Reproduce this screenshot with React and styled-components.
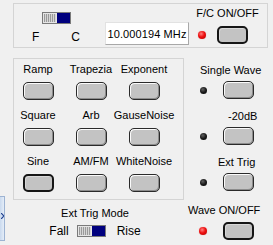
import styled, { createGlobalStyle } from "styled-components";

const GlobalStyle = createGlobalStyle`
  body {
    margin: 0;
    background: #f0f0f0;
    font-family: "Liberation Sans", Arial, sans-serif;
    font-size: 11px;
    color: #000;
  }
`;

const Screen = styled.div`
  width: 273px;
  height: 245px;
  display: grid;
  grid-template-columns: 13px 171px 1fr;
  grid-template-rows: 48px 152px 45px;
  background: #f0f0f0;
  overflow: hidden;
`;

const TopPanel = styled.div`
  grid-column: 2 / 4;
  margin: 3px 5px 0 0;
  border: 1px solid #d4d4d4;
  display: flex;
  align-items: flex-start;
  padding-left: 18px;
`;

const Text = styled.div`
  line-height: 14px;
  white-space: nowrap;
`;

const SwitchGroup = styled.div`
  width: 48px;
  margin-top: 8px;
  display: flex;
  flex-direction: column;
  align-items: center;
`;

const SwitchLabels = styled.div`
  align-self: stretch;
  display: flex;
  justify-content: space-between;
  margin-top: 6px;
  font-size: 12px;
`;

const Toggle = styled.div`
  width: 29px;
  height: 12px;
  display: flex;
  box-sizing: border-box;
  border: 1px solid #7a7a7a;
  flex-shrink: 0;
`;

const ToggleThumb = styled.div`
  flex: 1;
  box-sizing: border-box;
  border: 1px solid #e6e6e6;
  background: repeating-linear-gradient(
    90deg,
    #9a9a9a 0 1px,
    #d6d6d6 1px 2px
  );
`;

const ToggleTrack = styled.div`
  flex: 1;
  background: #00007e;
`;

const FreqDisplay = styled.div`
  width: 84px;
  height: 23px;
  margin: 18px 0 0 25px;
  box-sizing: border-box;
  background: #fff;
  border-top: 1px solid #e2e2e2;
  border-left: 1px solid #e2e2e2;
  border-right: 1px solid #a8a8a8;
  border-bottom: 1px solid #a8a8a8;
  display: flex;
  align-items: center;
  justify-content: center;
  letter-spacing: 0.1px;
`;

const PowerGroup = styled.div`
  width: 69px;
  margin: 2px 0 0 4px;
  display: flex;
  flex-direction: column;
  align-items: center;
`;

const LedRow = styled.div`
  display: flex;
  align-items: center;
  align-self: stretch;
  padding-left: ${(p) => p.$pad}px;
  gap: ${(p) => p.$gap}px;
  margin-top: ${(p) => p.$top}px;
`;

const Led = styled.div`
  width: ${(p) => (p.$on ? 8 : 7)}px;
  height: ${(p) => (p.$on ? 8 : 7)}px;
  border-radius: 50%;
  flex-shrink: 0;
  background: ${(p) =>
    p.$on
      ? "radial-gradient(circle at 40% 35%, #ff8080 0, #ee1010 45%, #b00000 100%)"
      : "radial-gradient(circle at 40% 35%, #606060 0, #1a1a1a 50%, #000 100%)"};
  box-shadow: ${(p) => (p.$on ? "0 0 1px #e08080" : "none")};
`;

const Button = styled.div`
  width: 31px;
  height: 18px;
  flex-shrink: 0;
  box-sizing: border-box;
  border-radius: 5px;
  background: #c3c3c3;
  border: ${(p) => (p.$bold ? "2px solid #161616" : "1px solid #2a2a2a")};
  box-shadow: ${(p) =>
    p.$bold
      ? "inset 1px 1px 0 #d8d8d8"
      : "inset 1px 1px 0 #fafafa, inset -1px -1px 0 #8c8c8c"};
`;

const WavePanel = styled.div`
  grid-column: 2;
  margin-top: 10px;
  border: 1px solid #d4d4d4;
  padding-top: 3px;
  display: grid;
  grid-template-columns: repeat(3, 48px);
  column-gap: 5px;
  row-gap: 8px;
  align-content: start;
`;

const WaveCell = styled.div`
  display: flex;
  flex-direction: column;
  align-items: center;
  gap: 6px;
`;

const SideColumn = styled.div`
  grid-column: 3;
  padding-top: 15px;
  display: flex;
  flex-direction: column;
  gap: 10px;
`;

const SideGroup = styled.div`
  display: flex;
  flex-direction: column;
`;

const SideLabel = styled(Text)`
  padding-left: ${(p) => p.$indent}px;
  margin-bottom: 4px;
`;

const SideTab = styled.div`
  grid-column: 1;
  grid-row: 2 / 4;
  align-self: end;
  margin-bottom: 4px;
  width: 5px;
  height: 45px;
  box-sizing: border-box;
  border: 1px solid #9db3d2;
  border-left: none;
  background: linear-gradient(90deg, #c9d9ee, #e4edf8);
  display: flex;
  justify-content: center;
  padding-top: 16px;
`;

const TrigMode = styled.div`
  grid-column: 2;
  padding: 6px 7px 0 0;
  display: flex;
  flex-direction: column;
  align-items: center;
`;

const TrigRow = styled.div`
  display: flex;
  align-items: center;
  margin-top: 4px;
  font-size: 12px;
`;

const TrigWord = styled(Text)`
  margin: 0 ${(p) => p.$right}px 0 ${(p) => p.$left}px;
`;

const WavePower = styled.div`
  grid-column: 3;
  padding: 3px 0 0 4px;
  display: flex;
  flex-direction: column;
`;

const waves = [
  "Ramp",
  "Trapezia",
  "Exponent",
  "Square",
  "Arb",
  "GauseNoise",
  "Sine",
  "AM/FM",
  "WhiteNoise",
];

const sideItems = [
  { label: "Single Wave", indent: 16 },
  { label: "-20dB", indent: 44 },
  { label: "Ext Trig", indent: 34 },
];

export default function App() {
  return (
    <>
      <GlobalStyle />
      <Screen>
        <TopPanel>
          <SwitchGroup>
            <Toggle>
              <ToggleThumb />
              <ToggleTrack />
            </Toggle>
            <SwitchLabels>
              <Text>F</Text>
              <Text>C</Text>
            </SwitchLabels>
          </SwitchGroup>
          <FreqDisplay>10.000194 MHz</FreqDisplay>
          <PowerGroup>
            <Text>F/C ON/OFF</Text>
            <LedRow $pad={5} $gap={11} $top={6}>
              <Led $on />
              <Button $bold />
            </LedRow>
          </PowerGroup>
        </TopPanel>

        <WavePanel>
          {waves.map((w) => (
            <WaveCell key={w}>
              <Text>{w}</Text>
              <Button $bold={w === "Sine"} />
            </WaveCell>
          ))}
        </WavePanel>

        <SideColumn>
          {sideItems.map((s) => (
            <SideGroup key={s.label}>
              <SideLabel $indent={s.indent}>{s.label}</SideLabel>
              <LedRow $pad={16} $gap={16} $top={0}>
                <Led />
                <Button />
              </LedRow>
            </SideGroup>
          ))}
        </SideColumn>

        <SideTab>
          <svg width="3" height="6" viewBox="0 0 3 6">
            <path d="M0 0 L3 3 L0 6" fill="none" stroke="#1f3f8f" strokeWidth="1.2" />
          </svg>
        </SideTab>

        <TrigMode>
          <Text>Ext Trig Mode</Text>
          <TrigRow>
            <TrigWord $left={0} $right={8}>Fall</TrigWord>
            <Toggle>
              <ToggleThumb />
              <ToggleTrack />
            </Toggle>
            <TrigWord $left={11} $right={0}>Rise</TrigWord>
          </TrigRow>
        </TrigMode>

        <WavePower>
          <Text>Wave ON/OFF</Text>
          <LedRow $pad={11} $gap={16} $top={5}>
            <Led $on />
            <Button $bold />
          </LedRow>
        </WavePower>
      </Screen>
    </>
  );
}
